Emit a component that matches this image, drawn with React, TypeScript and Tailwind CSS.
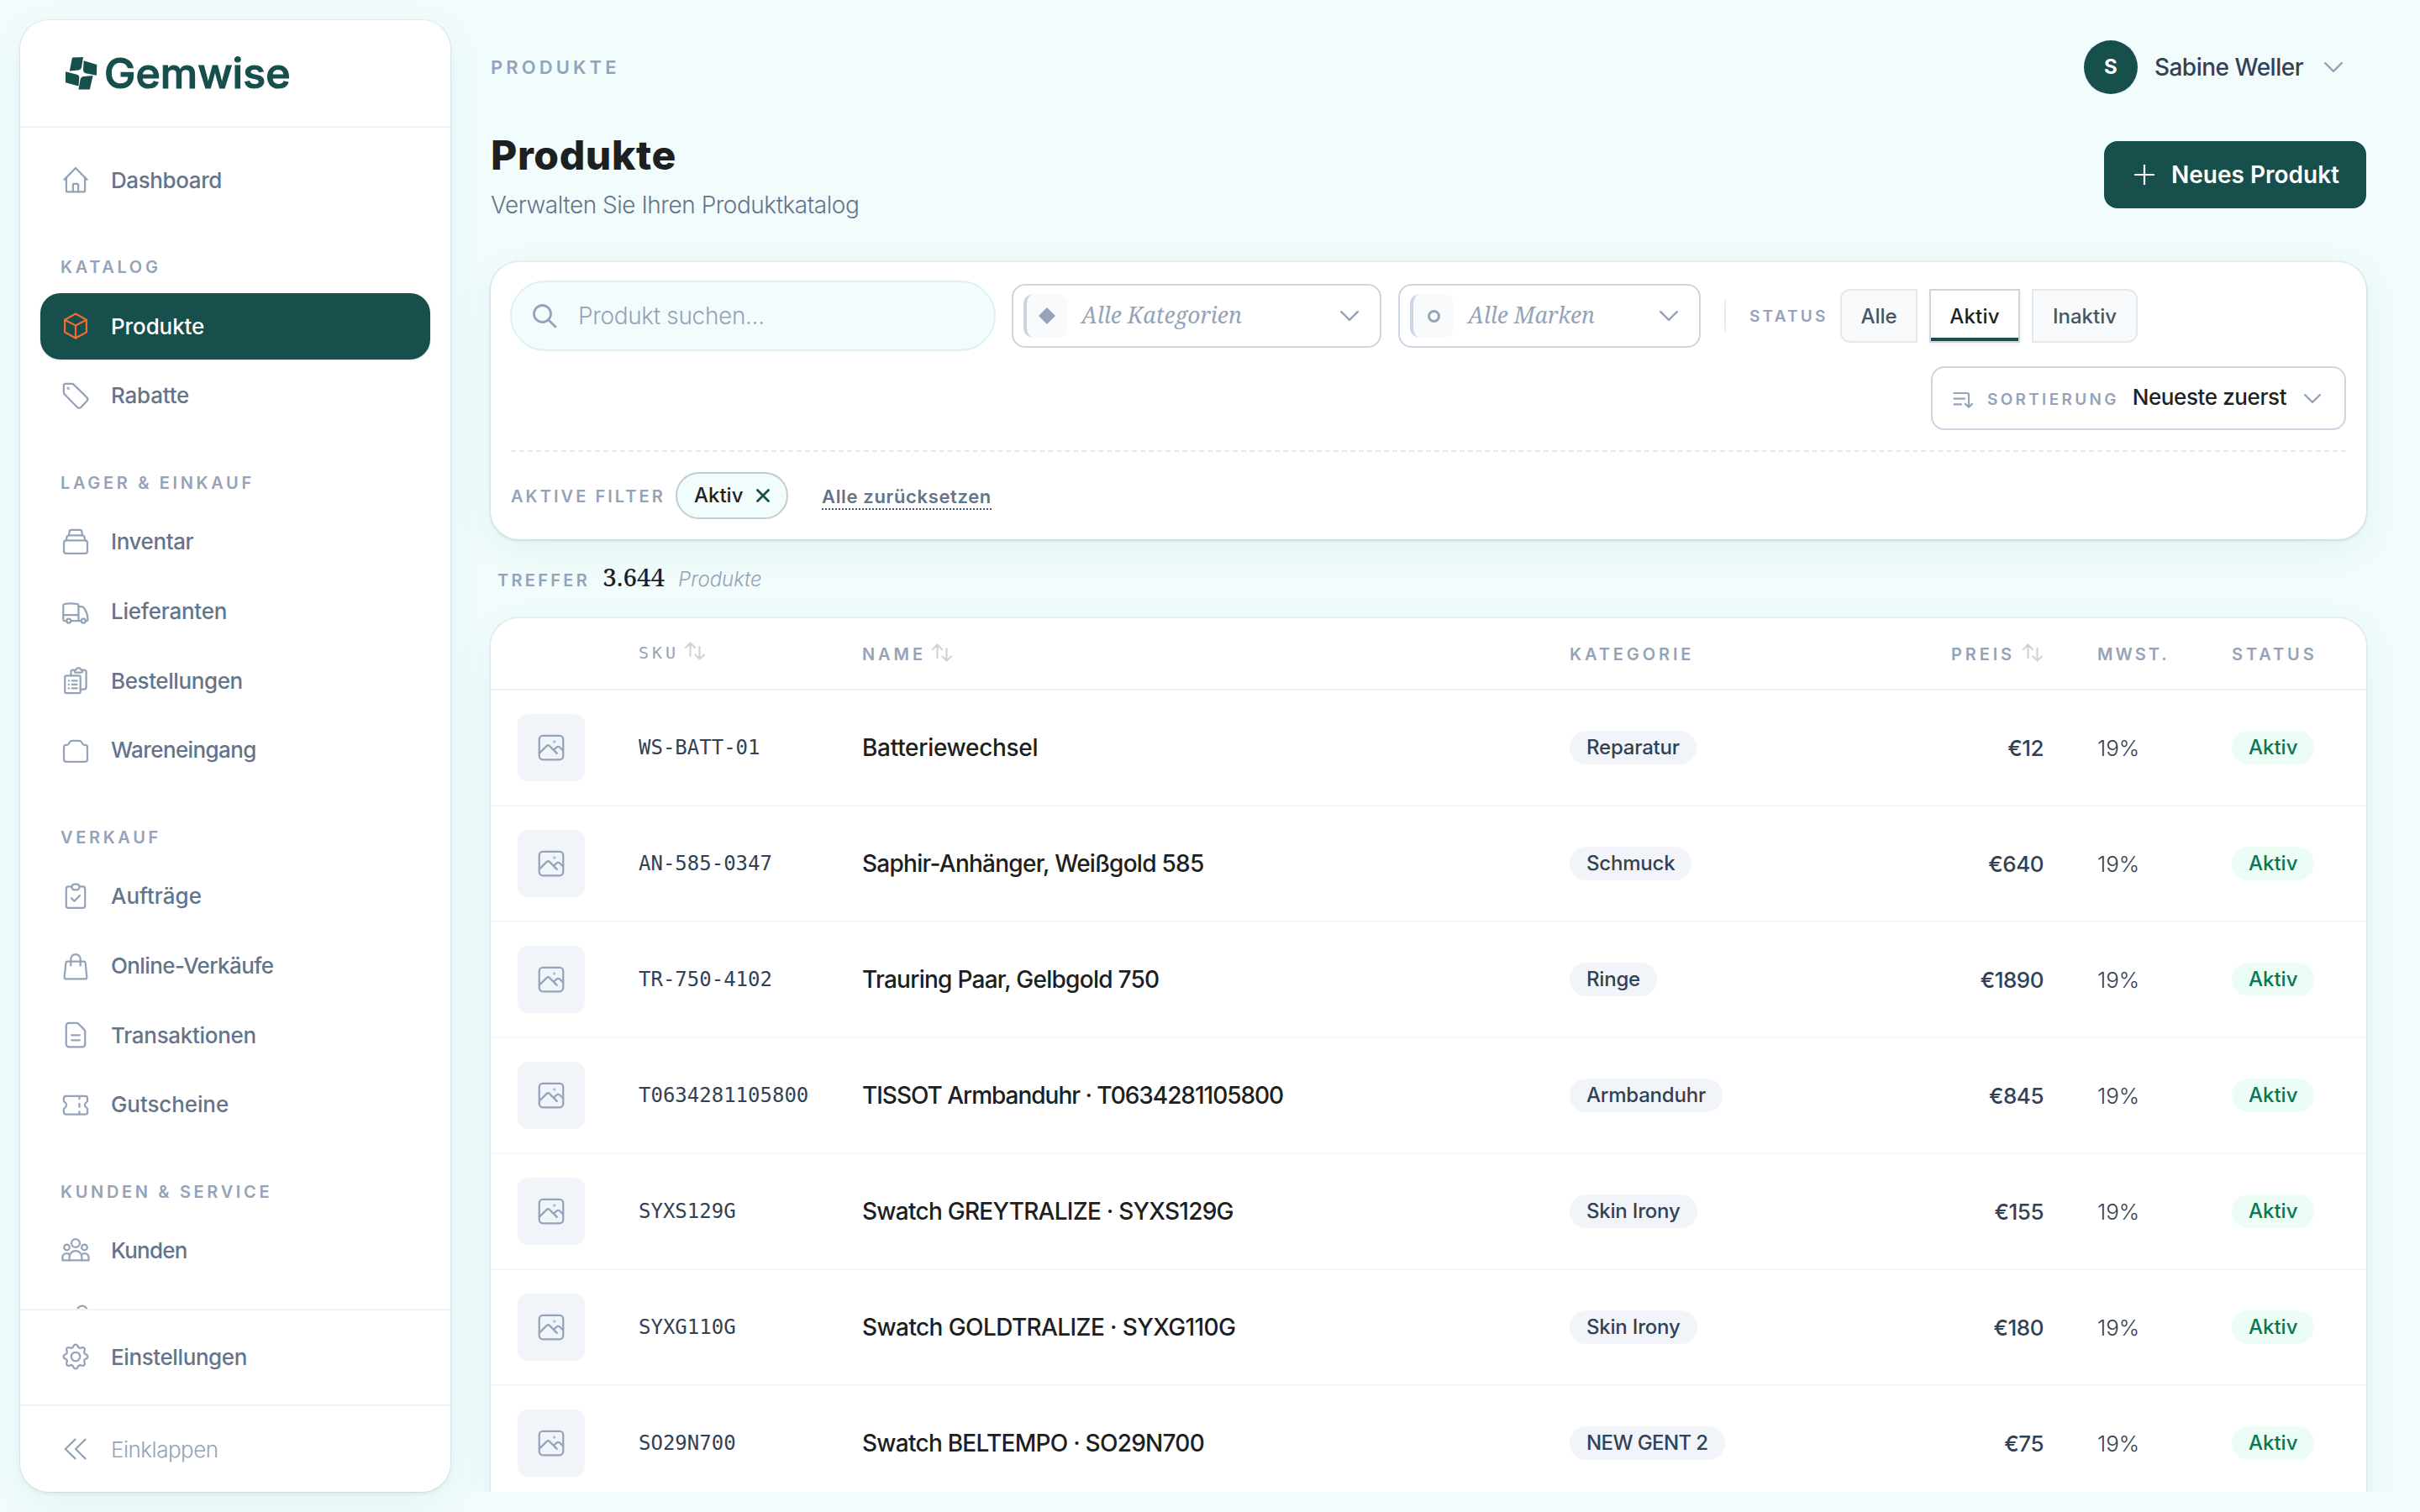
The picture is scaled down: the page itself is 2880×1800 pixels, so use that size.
import type { ReactNode } from 'react';

interface NavItem {
  label: string;
  icon: ReactNode;
  tracking?: string;
}

interface NavSection {
  title: string;
  items: NavItem[];
}

interface Product {
  sku: string;
  name: string;
  category: string;
  price: string;
  tracking?: string;
}

// 8-tooth gear outline, rounded teeth
const gearPath =
  Array.from({ length: 97 }, (_, i) => {
    const a = (i / 96) * Math.PI * 2;
    const wave = Math.cos(8 * a);
    const r = 8.55 + 1.1 * Math.sign(wave) * Math.pow(Math.abs(wave), 0.8);
    return `${i === 0 ? 'M' : 'L'}${(12 + r * Math.sin(a)).toFixed(2)} ${(12 - r * Math.cos(a)).toFixed(2)}`;
  }).join(' ') + 'Z';

const icons = {
  home: (
    <>
      <path d="M3 11.9 12 2.7l9 9.2" />
      <path d="M4.6 10.3v10.5c0 .5.3.8.8.8h13.2c.5 0 .8-.3.8-.8V10.3" />
      <path d="M9.9 21.6v-5.4c0-.6.4-1 1-1h2.2c.6 0 1 .4 1 1v5.4" />
    </>
  ),
  box: (
    <>
      <path d="M12 2.4l8.6 4.7v9.9L12 21.7 3.4 17V7.1z" />
      <path d="M3.4 7.1 12 11.6l8.6-4.5M12 11.6v10.1" />
    </>
  ),
  tag: (
    <>
      <path d="M3.9 2.6h5.3c.5 0 .9.2 1.2.5l10.5 10.3c.9.9.9 2 0 2.9l-4.6 4.9c-.9.9-2.1.9-3 0L3.1 10.8c-.3-.4-.5-.8-.5-1.3V3.9c0-.8.5-1.3 1.3-1.3z" />
      <circle cx="6.1" cy="6.2" r=".4" />
    </>
  ),
  stack: (
    <>
      <rect x="2.7" y="10.9" width="18.6" height="10.4" rx="1.8" />
      <path d="M4.5 10.9l.5-2.8c.2-.8.7-1.2 1.4-1.2h11.2c.8 0 1.2.4 1.4 1.2l.5 2.8" />
      <path d="M6.7 6.9l.4-3c.1-.8.6-1.3 1.4-1.3h7c.8 0 1.3.5 1.4 1.3l.4 3" />
    </>
  ),
  truck: (
    <>
      <path d="M4.8 19.4H3.2a1 1 0 0 1-1-1V7.2c0-.7.4-1.1 1.1-1.2 2.8-.5 6.6-.5 9.8 0 .7.1 1.2.5 1.2 1.2v12.2M8.2 19.4h8.3M2.2 14.8h12.1" />
      <path d="M14.3 8h2.2c1 0 1.9.5 2.4 1.4 1.6 2.5 2.6 5.2 2.8 8.6 0 .9-.4 1.4-1.3 1.4h-.4" />
      <circle cx="6.5" cy="19.4" r="1.7" />
      <circle cx="18.2" cy="19.4" r="1.7" />
    </>
  ),
  orders: (
    <>
      <rect x="3.5" y="8.2" width="12.3" height="13.8" rx="1" />
      <path d="M8.3 8.2V5.3c0-.9.6-1.5 1.5-1.5h1.4M17.3 3.8h1.4c1 0 1.7.7 1.7 1.7v11.8c0 1-.7 1.7-1.7 1.7h-2.9" />
      <path d="M11.2 4.8c0-.8.5-1.3 1.3-1.3.3-.9 1-1.4 1.8-1.4s1.5.5 1.8 1.4c.8 0 1.3.5 1.3 1.3 0 .5-.4.9-.9.9h-4.4c-.5 0-.9-.4-.9-.9z" />
      <path d="M9.1 12.2h4M9.1 15.2h4M9.1 18.3h4M6.5 12.2h.2M6.5 15.2h.2M6.5 18.3h.2" />
    </>
  ),
  inbound: (
    <path d="M2.7 9.6v9.8c0 1 .8 1.8 1.8 1.8h15c1 0 1.8-.8 1.8-1.8V9.6c0-1-.8-1.7-1.8-1.7h-.4c-.7 0-1.2-.3-1.6-.9l-.9-1.5c-.4-.6-1-.9-1.7-.9H9.1c-.7 0-1.3.3-1.7.9L6.500 7c-.4.6-.9.9-1.6.9h-.4c-1 0-1.8.7-1.8 1.7z" />
  ),
  clipboard: (
    <>
      <path d="M9 4.2H6.3A1.8 1.8 0 0 0 4.5 6v13.5c0 1 .8 1.8 1.8 1.8h11.4c1 0 1.8-.8 1.8-1.8V6a1.8 1.8 0 0 0-1.8-1.8H15" />
      <rect x="9" y="2.4" width="6" height="4.5" rx="2" />
      <path d="M8.6 13.5l2.4 2.3 4.4-4.5" />
    </>
  ),
  bag: (
    <>
      <path d="M5.3 8.4h13.4c.5 0 .9.4 1 .9l1.2 11.8c.1.6-.3 1.1-.9 1.1H4c-.6 0-1-.5-.9-1.1L4.3 9.3c.1-.5.5-.9 1-.9z" />
      <path d="M8.2 11.7V6.5a3.8 3.8 0 0 1 7.6 0v5.2" />
    </>
  ),
  doc: (
    <>
      <path d="M6.5 2.6h6.2c.6 0 1.1.2 1.5.6l4.7 4.7c.4.4.6.9.6 1.5v10.1c0 1.1-.9 2-2 2h-11c-1.1 0-2-.9-2-2V4.6c0-1.1.9-2 2-2z" />
      <path d="M8.8 12.2h6.4M8.8 16.2h6.4" />
    </>
  ),
  ticket: (
    <>
      <path d="M4.4 5.3h15.2c1 0 1.8.8 1.8 1.8v1.7c0 .6-.3 1-.8 1.3-1.7 1-1.7 3.3 0 4.3.5.3.8.7.8 1.3V18c0 1-.8 1.8-1.8 1.800H4.4c-1 0-1.8-.8-1.8-1.8v-2.300c0-.6.3-1 .8-1.3 1.7-1 1.7-3.3 0-4.3-.5-.3-.8-.7-.8-1.3V7.1c0-1 .8-1.8 1.8-1.8z" />
      <path d="M15 5.3v2.2M15 11.2v2.6M15 17.5v2.200" />
    </>
  ),
  people: (
    <>
      <circle cx="12" cy="6" r="3.3" />
      <circle cx="5" cy="9.3" r="2.2" />
      <circle cx="19" cy="9.3" r="2.2" />
      <path d="M7.1 19.6V17a4.9 4.9 0 0 1 9.8 0v2.6" />
      <path d="M7.2 15.2c-.6-.8-1.4-1.2-2.4-1.2-1.9 0-3.2 1.4-3.2 3.3v2.3h20.800v-2.300c0-1.9-1.3-3.3-3.2-3.3-1 0-1.8.4-2.4 1.2" />
    </>
  ),
  wrench: <circle cx="17.2" cy="7.1" r="4" />,
  gear: (
    <>
      <path d={gearPath} />
      <circle cx="12" cy="12" r="3.5" />
    </>
  ),
  collapse: <path d="M11.6 4.4 3.9 12l7.7 7.6M19.7 4.4 12 12l7.7 7.6" />,
  image: (
    <>
      <rect x="2.5" y="2.5" width="19" height="19" rx="2.8" />
      <path d="M2.6 16.4 8.7 10.4c.5-.5 1.2-.5 1.7 0l6.1 6.2M13.9 14l2.4-2.3c.7-.7 1.7-.7 2.4 0l2.7 2.6" />
      <circle cx="14.5" cy="7.3" r=".3" />
    </>
  ),
};

function Icon({ children, className = '' }: { children: ReactNode; className?: string }) {
  return (
    <svg
      viewBox="0 0 24 24"
      fill="none"
      stroke="currentColor"
      strokeWidth="1.5"
      strokeLinecap="round"
      strokeLinejoin="round"
      className={`size-9 shrink-0 ${className}`}
    >
      {children}
    </svg>
  );
}

function Chevron({ className = '' }: { className?: string }) {
  return (
    <svg viewBox="0 0 22 12" fill="none" stroke="currentColor" strokeWidth="2.4" strokeLinecap="round" strokeLinejoin="round" className={`shrink-0 ${className}`}>
      <path d="M1.2 1.2 11 10.8l9.8-9.6" />
    </svg>
  );
}

function SortArrows() {
  return (
    <svg viewBox="0 0 26 24" fill="none" stroke="currentColor" strokeWidth="2.2" strokeLinecap="round" strokeLinejoin="round" className="-mt-1 h-6 w-[26px] shrink-0 text-[#d0d4da]">
      <path d="M7.5 18V2.5M2 8l5.5-5.5L13 8M18.5 7v14.5M13.5 16.5l5 5 5.5-5" />
    </svg>
  );
}

const sections: NavSection[] = [
  {
    title: 'Katalog',
    items: [
      { label: 'Produkte', icon: icons.box, tracking: 'tracking-[-0.1px]' },
      { label: 'Rabatte', icon: icons.tag, tracking: 'tracking-[-0.2px]' },
    ],
  },
  {
    title: 'Lager & Einkauf',
    items: [
      { label: 'Inventar', icon: icons.stack },
      { label: 'Lieferanten', icon: icons.truck, tracking: 'tracking-[-0.25px]' },
      { label: 'Bestellungen', icon: icons.orders },
      { label: 'Wareneingang', icon: icons.inbound, tracking: 'tracking-[-0.6px]' },
    ],
  },
  {
    title: 'Verkauf',
    items: [
      { label: 'Aufträge', icon: icons.clipboard, tracking: 'tracking-[0px]' },
      { label: 'Online-Verkäufe', icon: icons.bag, tracking: 'tracking-[-0.6px]' },
      { label: 'Transaktionen', icon: icons.doc, tracking: 'tracking-[-0.3px]' },
      { label: 'Gutscheine', icon: icons.ticket, tracking: 'tracking-[-0.1px]' },
    ],
  },
  {
    title: 'Kunden & Service',
    items: [{ label: 'Kunden', icon: icons.people, tracking: 'tracking-[-0.8px]' }],
  },
];

const products: Product[] = [
  { sku: 'WS-BATT-01', name: 'Batteriewechsel', category: 'Reparatur', price: '€12', tracking: 'tracking-[-0.3px]' },
  { sku: 'AN-585-0347', name: 'Saphir-Anhänger, Weißgold 585', category: 'Schmuck', price: '€640' },
  { sku: 'TR-750-4102', name: 'Trauring Paar, Gelbgold 750', category: 'Ringe', price: '€1890' },
  { sku: 'T0634281105800', name: 'TISSOT Armbanduhr · T0634281105800', category: 'Armbanduhr', price: '€845', tracking: 'tracking-[-1.03px]' },
  { sku: 'SYXS129G', name: 'Swatch GREYTRALIZE · SYXS129G', category: 'Skin Irony', price: '€155' },
  { sku: 'SYXG110G', name: 'Swatch GOLDTRALIZE · SYXG110G', category: 'Skin Irony', price: '€180', tracking: 'tracking-[-0.6px]' },
  { sku: 'SO29N700', name: 'Swatch BELTEMPO · SO29N700', category: 'NEW GENT 2', price: '€75' },
];

function NavLink({ item, active = false }: { item: NavItem; active?: boolean }) {
  return (
    <a
      className={`flex h-[78.67px] shrink-0 items-center gap-6 rounded-3xl px-6 text-[26px] font-[480] ${
        active ? 'bg-[#174f4d] text-white shadow-sm' : 'text-[#64748b]'
      }`}
    >
      <Icon className={active ? 'text-[#ee6c2f]' : 'text-[#94a3b8]'}>{item.icon}</Icon>
      <span className={item.tracking ?? 'tracking-[-0.4px]'}>{item.label}</span>
    </a>
  );
}

function Sidebar() {
  return (
    <aside className="flex w-[512px] shrink-0 flex-col overflow-hidden rounded-[34px] bg-white shadow-[0_0_0_1px_rgba(23,79,77,0.07),0_2px_4px_rgba(23,79,77,0.08),0_12px_48px_rgba(20,130,120,0.07)]">
      <div className="flex h-32 shrink-0 items-center border-b-2 border-[#f1f2f3] pl-[54px]">
        <svg viewBox="0 0 38 39" className="h-[39px] w-[38px] fill-[#174f4d]">
          <path d="M8 .4 21 0 19.2 11.5Q18.7 14.7 15.5 15.4L4.8 16.4z" />
          <path d="M21.7 4.2 37.3 9l-.4 12.7L24 19.2Q21.2 18.5 21 15z" />
          <path d="M32.6 22 28.9 38.4H15.5L17.5 27.2Q18.2 23.4 21.5 22.9z" />
          <path d="M0 17.3 13.4 20.7Q16.5 21.6 16.3 24.5L15.5 34.5 0 30.2z" />
        </svg>
        <span className="ml-2 text-[50px] leading-none font-medium text-[#174f4d] [-webkit-text-stroke:1.2px_#174f4d]">
          Gemwise
        </span>
      </div>

      <nav className="flex flex-1 flex-col overflow-hidden px-6 pt-[23px]">
        <NavLink item={{ label: 'Dashboard', icon: icons.home }} />
        {sections.map((section) => (
          <div key={section.title}>
            <h2 className="px-6 pt-[48.5px] pb-[13.5px] text-[20px] leading-[33.33px] font-semibold tracking-[3.65px] text-[#94a3b8] uppercase">
              {section.title}
            </h2>
            <div className="flex flex-col gap-1">
              {section.items.map((item) => (
                <NavLink key={item.label} item={item} active={item.label === 'Produkte'} />
              ))}
            </div>
          </div>
        ))}
        {/* next entry, scrolled out below the fold */}
        <Icon className="mt-[21.5px] ml-6 text-[#94a3b8]">{icons.wrench}</Icon>
      </nav>

      <div className="flex h-[114px] shrink-0 flex-col justify-center border-t-2 border-[#f1f2f3] px-6 pb-0.5">
        <NavLink item={{ label: 'Einstellungen', icon: icons.gear }} />
      </div>
      <div className="flex h-[104px] shrink-0 items-center gap-6 border-t-2 border-[#f1f2f3] px-12 text-[26px] font-light tracking-[-0.5px] text-[#94a3b8]">
        <Icon>{icons.collapse}</Icon>
        <span>Einklappen</span>
      </div>
    </aside>
  );
}

function FilterSelect({ label, glyph, className }: { label: string; glyph: ReactNode; className: string }) {
  return (
    <button className={`flex h-19 shrink-0 items-center rounded-2xl border-2 border-[#cbd5e1] bg-white pr-[25px] pl-3 ${className}`}>
      <span className="flex size-[52px] items-center justify-center rounded-xl border-l-4 border-[#cbd5e1] bg-[#f8fafc] text-[#94a3b8]">
        {glyph}
      </span>
      <span className="ml-[17px] flex-1 text-left font-['Noto_Serif','DejaVu_Serif',serif] text-[26.5px] text-[#94a3b8] italic">
        {label}
      </span>
      <Chevron className="h-3 w-[22px]  text-[#94a3b8]" />
    </button>
  );
}

function Filters() {
  return (
    <section className="shrink-0 rounded-[34px] bg-white px-6 pt-[22px] pb-6 shadow-[0_0_0_2px_rgba(23,79,77,0.06),0_2px_4px_rgba(23,79,77,0.08),0_12px_48px_rgba(20,110,100,0.07)]">
      <div className="flex h-21 items-center">
        <label className="-ml-px flex h-21 w-[578px] shrink-0 items-center rounded-full border-2 border-[#dff1ee] bg-[#f3fcfd] pl-6 text-[#94a3b8]">
          <svg viewBox="0 0 30 30" fill="none" stroke="currentColor" strokeWidth="2.8" strokeLinecap="round" className="size-[30px]">
            <circle cx="12.5" cy="12.5" r="10" />
            <path d="M20 20l8 8" />
          </svg>
          <span className="ml-[25px] text-[28px] font-light tracking-[-0.35px]">Produkt suchen...</span>
        </label>
        <FilterSelect
          label="Alle Kategorien"
          className="ml-[19px] w-[440px]"
          glyph={
            <svg viewBox="0 0 20 20" className="size-5 fill-current">
              <path d="M10 0l10 10-10 10L0 10z" />
            </svg>
          }
        />
        <FilterSelect
          label="Alle Marken"
          className="ml-5 w-[360px]"
          glyph={<span className="size-[15px] rounded-full border-3 border-current" />}
        />
        <span className="ml-7 h-10 w-0.5 bg-linear-to-b from-[#eef1f5] via-[#dfe4eb] to-[#eef1f5]" />
        <span className="ml-7 w-[108px] pt-0.5 text-[19px] font-semibold tracking-[3.2px] text-[#94a3b8]">STATUS</span>
        <div className="flex gap-3.5 text-[24px] font-[480] text-[#475569]">
          <button className="h-16 w-[92px] rounded-l-xl border-2 border-[#e2e8f0] bg-[#f8fafc] pt-0.5">Alle</button>
          <button className="h-16 w-[108px] border-2 border-[#cbd5e1] bg-white pt-0.5 tracking-[0.2px] text-[#1c2322] shadow-[inset_0_-4px_0_#174f4d,0_2px_4px_rgba(15,23,42,0.05)]">
            Aktiv
          </button>
          <button className="h-16 w-[126px] rounded-r-xl border-2 border-[#e2e8f0] bg-[#f8fafc] pt-0.5">Inaktiv</button>
        </div>
      </div>

      <div className="mt-[18px] flex justify-end">
        <button className="flex h-19 w-[494px] items-center rounded-2xl border-2 border-[#cbd5e1] pl-6 text-[#94a3b8]">
          <svg viewBox="0 0 24 20" fill="none" stroke="currentColor" strokeWidth="2.2" strokeLinecap="round" strokeLinejoin="round" className="mt-1 h-5 w-6">
            <path d="M1.5 2H17c1.3 0 2 .7 2 2v14.5M14.8 14.7l4.2 4 4.2-4M1.5 8.7H14M1.5 15.4H10" />
          </svg>
          <span className="mt-1 ml-[17px] text-[19px] font-semibold tracking-[3.3px]">SORTIERUNG</span>
          <span className="-mt-1 ml-4 text-[26px] font-[480] tracking-[-0.4px] text-[#1c2322]">Neueste zuerst</span>
          <Chevron className="ml-[21px] h-[11px] w-5" />
        </button>
      </div>

      {/* Active filters */}
      <div className="mt-6 flex items-center border-t-2 border-dashed border-[#e4e8ec] pt-6">
        <span className="w-[196px] pt-0.5 text-[20px] font-semibold tracking-[3.05px] text-[#94a3b8]">AKTIVE FILTER</span>
        <span className="flex h-14 w-[134px] items-center rounded-full border-2 border-[#bcd0ce] bg-[#f3fcfd] pl-5 text-[24px] font-[480] text-[#1c2322]">
          Aktiv
          <svg viewBox="0 0 16 16" fill="none" stroke="#174f4d" strokeWidth="2.8" strokeLinecap="round" className="ml-4 size-4">
            <path d="M1.5 1.5l13 13M14.5 1.5l-13 13" />
          </svg>
        </span>
        <a className="mt-1 ml-10 border-b-2 border-dotted border-[#475569] text-[22px] leading-[27px] font-semibold tracking-[0.65px] text-[#64748b]">
          Alle zurücksetzen
        </a>
      </div>
    </section>
  );
}

const columns = 'grid grid-cols-[144px_266px_842px_400px_164px_64px_160px_1fr] items-center pl-8';

function ProductTable() {
  return (
    <section className="shrink-0 rounded-t-[34px] bg-white pb-20 shadow-[0_0_0_2px_rgba(23,79,77,0.06),0_12px_48px_rgba(20,130,120,0.07)]">
      <div className={`${columns} h-[86px] border-b-2 border-[#eff1f3] pt-0.5 text-[20px] font-semibold tracking-[3.9px] text-[#94a3b8]`}>
        <span />
        <span className="flex items-center gap-1.5 pb-1 font-['DejaVu_Sans_Mono',monospace] font-normal tracking-[4px]">
          SKU <SortArrows />
        </span>
        <span className="flex items-center gap-1.5">
          NAME <SortArrows />
        </span>
        <span>KATEGORIE</span>
        <span className="flex items-center justify-end gap-2">
          PREIS <SortArrows />
        </span>
        <span />
        <span className="tracking-[3px]">MWST.</span>
        <span>STATUS</span>
      </div>
      {products.map((product) => (
        <div key={product.sku} className={`${columns} h-[138px] border-b-2 border-[#f5f6f8] text-[26px] text-[#334155]`}>
          <span className="flex size-20 items-center justify-center rounded-xl bg-[#f1f5f9] text-[#94a3b8]">
            <Icon>{icons.image}</Icon>
          </span>
          <span className="font-['DejaVu_Sans_Mono',monospace] text-[24px]">{product.sku}</span>
          <span className={`text-[28px] font-[480] text-[#1c2020] ${product.tracking ?? 'tracking-[-0.74px]'}`}>
            {product.name}
          </span>
          <span className="flex">
            <span
              className={`rounded-full bg-[#f1f5f9] px-5 text-[24px] leading-10 font-[480] ${
                product.category === 'NEW GENT 2' ? 'tracking-[-0.6px]' : 'tracking-[-0.2px]'
              }`}
            >
              {product.category}
            </span>
          </span>
          <span className="text-right font-medium tracking-[-0.5px]">{product.price}</span>
          <span />
          <span className="font-light">19%</span>
          <span className="flex">
            <span className="rounded-full bg-[#ecfdf5] px-5 text-[24px] leading-10 font-medium text-[#047857]">Aktiv</span>
          </span>
        </div>
      ))}
    </section>
  );
}

export default function App() {
  return (
    <div className="flex h-[1800px] w-[2880px] gap-12 overflow-hidden bg-[#f2fcfd] py-6 pl-6 font-['Inter',sans-serif]">
      <Sidebar />
      <main className="flex w-[2232px] flex-col overflow-y-clip">
        {/* Top bar */}
        <header className="flex h-28 shrink-0 items-center justify-between pr-7">
          <span className="text-[22px] font-semibold tracking-[4.1px] text-[#94a3b8]">PRODUKTE</span>
          <div className="flex items-center">
            <span className="flex size-16 items-center justify-center rounded-full bg-[#174f4d] text-[24px] font-bold text-white">S</span>
            <span className="ml-5 text-[28px] font-[480] tracking-[-0.5px] text-[#334155]">Sabine Weller</span>
            <Chevron className="ml-[25px] h-3 w-[22px] text-[#94a3b8]" />
          </div>
        </header>

        <div className="flex h-[176px] shrink-0 items-start justify-between pt-5">
          <div>
            <h1 className="text-[48px] leading-[58px] font-extrabold tracking-[0.6px] text-[#1c2020]">Produkte</h1>
            <p className="mt-2.5 text-[28px] leading-10 font-light tracking-[-0.48px] text-[#64748b]">
              Verwalten Sie Ihren Produktkatalog
            </p>
          </div>
          <button className="mt-3 flex h-20 w-[312px] items-center rounded-2xl bg-[#174f4d] pl-9 text-[28px] font-semibold text-white">
            <svg viewBox="0 0 24 24" fill="none" stroke="currentColor" strokeWidth="2.2" strokeLinecap="round" className="size-6">
              <path d="M12 1v22M1 12h22" />
            </svg>
            <span className="ml-5">Neues Produkt</span>
          </button>
        </div>

        <Filters />

        <div className="flex h-[94px] shrink-0 items-baseline pt-[25px] pl-2 leading-10 text-[#94a3b8]">
          <span className="text-[20px] font-semibold tracking-[3.3px]">TREFFER</span>
          <span className="ml-[15px] font-['Noto_Serif','DejaVu_Serif',serif] text-[29.5px] font-medium text-[#1c2020]">3.644</span>
          <span className="ml-4 text-[24px] font-light italic">Produkte</span>
        </div>

        <ProductTable />
      </main>
    </div>
  );
}
